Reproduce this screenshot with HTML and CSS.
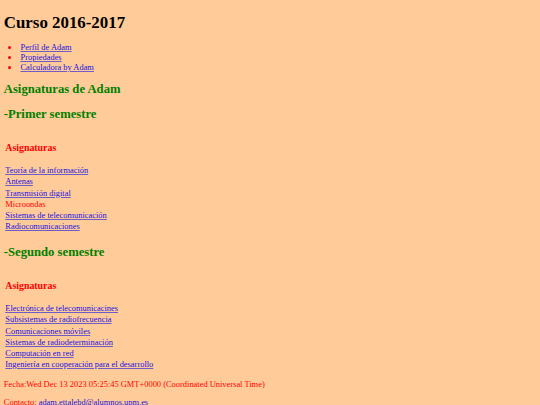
FILE: index.html
```html
<!DOCTYPE html>
<html lang="es">
<head>
<meta charset="utf-8">
<title>Curso 2016-2017</title>
<link rel="stylesheet" href="styles.css">
</head>
<body>
<h1 class="title">Curso 2016-2017</h1>
<ul class="menu">
  <li><a href="#">Perfil de Adam</a></li>
  <li><a href="#">Propiedades</a></li>
  <li><a href="#">Calculadora by Adam</a></li>
</ul>
<h2 class="section">Asignaturas de Adam</h2>
<h2 class="section">-Primer semestre</h2>
<table class="subjects">
  <tr><th><h3 class="subjects-head">Asignaturas</h3></th></tr>
  <tr><td><a href="#">Teoría de la información</a></td></tr>
  <tr><td><a href="#">Antenas</a></td></tr>
  <tr><td><a href="#">Transmisión digital</a></td></tr>
  <tr><td class="plain">Microondas</td></tr>
  <tr><td><a href="#">Sistemas de telecomunicación</a></td></tr>
  <tr><td><a href="#">Radiocomunicaciones</a></td></tr>
</table>
<h2 class="section">-Segundo semestre</h2>
<table class="subjects">
  <tr><th><h3 class="subjects-head">Asignaturas</h3></th></tr>
  <tr><td><a href="#">Electrónica de telecomunicacines</a></td></tr>
  <tr><td><a href="#">Subsistemas de radiofrecuencia</a></td></tr>
  <tr><td><a href="#">Comunicaciones móviles</a></td></tr>
  <tr><td><a href="#">Sistemas de radiodeterminación</a></td></tr>
  <tr><td><a href="#">Computación en red</a></td></tr>
  <tr><td><a href="#">Ingeniería en cooperación para el desarrollo</a></td></tr>
</table>
<p class="note">Fecha:Wed Dec 13 2023 05:25:45 GMT+0000 (Coordinated Universal Time)</p>
<p class="note">Contacto: <a href="#">adam.ettalebd@alumnos.upm.es</a></p>
</body>
</html>
```

FILE: styles.css
```css
html {
  background: #ffcc99;
}
body {
  margin: 0;
  padding: 1px 3.8px 0;
  font-family: "Liberation Serif", "Times New Roman", serif;
  font-size: 8.44px;
  line-height: 10px;
  color: #000;
  background: #ffcc99;
}
a {
  color: #1a10e0;
  text-decoration-color: #6f5cc8;
}
.title {
  font-size: 16.87px;
  line-height: 19px;
  margin: 11.5px 0 10.5px;
  font-weight: bold;
}
.menu {
  margin: 0;
  padding-left: 16.7px;
}
.menu li {
  line-height: 10px;
}
.menu li::marker {
  color: #ff0000;
}
.section {
  font-size: 12.66px;
  line-height: 15px;
  margin: 10px 0;
  color: #008000;
}
.subjects + .section {
  margin-top: 12px;
}
.subjects {
  border-spacing: 1px;
  border-collapse: separate;
  margin: 0 0 1.8px;
}
.subjects th,
.subjects td {
  padding: 0.3px 0.5px;
  text-align: left;
  line-height: 9.6px;
}
.subjects-head {
  font-size: 9.87px;
  line-height: 12px;
  margin: 8.7px 0 10.6px;
  color: #ff0000;
}
.plain {
  color: #ff0000;
}
.note {
  margin: 8px 0;
  color: #ff0000;
}
```
